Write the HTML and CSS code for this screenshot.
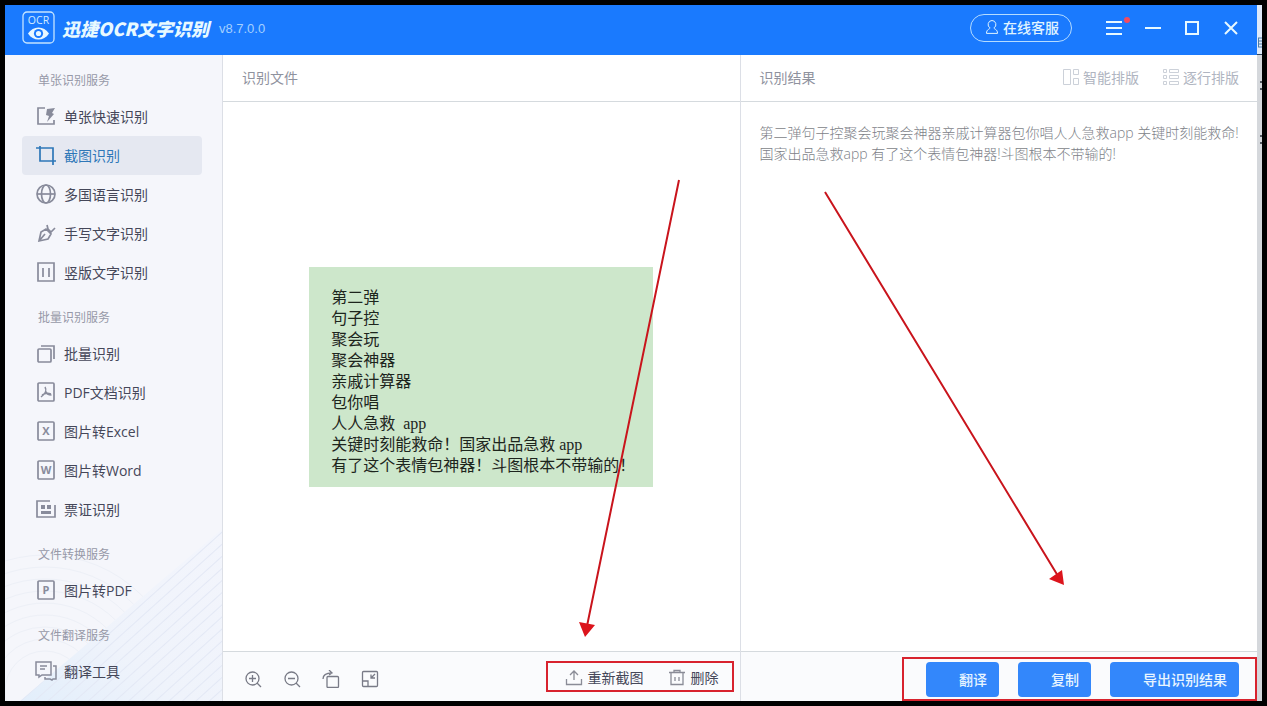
FILE: index.html
```
<!DOCTYPE html>
<html lang="zh-CN">
<head>
  <meta charset="UTF-8">
  <title>迅捷OCR文字识别</title>
  <link rel="stylesheet" href="styles.css">
</head>
<body>
  <div class="window">
    <header class="titlebar">
      <svg class="logo" viewBox="0 0 34 34" width="34" height="34">
        <rect x="1" y="1" width="31" height="31" rx="4" fill="none" stroke="#c4e4ff" stroke-width="1.3"/>
        <text x="16.5" y="12.500" text-anchor="middle" font-size="10.500" fill="#d4ecff">OCR</text>
        <path d="M6 22.500c5-8 16-8 21 0-5 8-16 8-21 0z" fill="#e8f7ff" stroke="none"/>
        <circle cx="16.5" cy="22.500" r="4.6" fill="#1a7afe" stroke="none"/>
        <circle cx="16.5" cy="22.500" r="2.6" fill="#e8f7ff" stroke="none"/>
      </svg>
      <h1 class="app-name">迅捷OCR文字识别</h1>
      <span class="version">v8.7.0.0</span>
      <button class="service">
        <svg viewBox="0 0 14 16" width="14" height="16"><path d="M7 1.5a4 4 0 0 1 2 7.400c0 1.500 3.500 1 3.500 5.500h-11c0-4.500 3.500-4 3.500-5.500a4 4 0 0 1 2-7.400z"/></svg>
        在线客服
      </button>
      <div class="window-buttons">
        <button aria-label="菜单"><svg viewBox="0 0 18 18" width="18" height="18"><path d="M1 3h16M1 9h16M1 15h16"/></svg><i class="dot"></i></button>
        <button aria-label="最小化"><svg viewBox="0 0 18 18" width="18" height="18"><path d="M1 9h16"/></svg></button>
        <button aria-label="最大化"><svg viewBox="0 0 18 18" width="18" height="18"><path d="M3 3h12v12H3z"/></svg></button>
        <button aria-label="关闭"><svg viewBox="0 0 18 18" width="18" height="18"><path d="M3 3l12 12M15 3L3 15"/></svg></button>
      </div>
    </header>

    <nav class="sidebar">
      <svg class="waves" viewBox="0 0 217 180" preserveAspectRatio="xMaxYMax slice">
        <defs>
          <pattern id="stripes" width="9" height="9" patternUnits="userSpaceOnUse" patternTransform="rotate(-42)">
            <path d="M0 .5h9" stroke="#e3e8f5"/>
          </pattern>
          <linearGradient id="tint" x1="0" y1="1" x2="1" y2="0">
            <stop offset="0" stop-color="#e2eefb"/>
            <stop offset=".4" stop-color="#eff3fb"/>
            <stop offset="1" stop-color="#f3f5fc"/>
          </linearGradient>
        </defs>
        <g fill="none" stroke="#edf0f7">
          <circle cx="40" cy="170" r="40"/><circle cx="40" cy="170" r="52"/><circle cx="40" cy="170" r="64"/>
          <circle cx="40" cy="170" r="76"/><circle cx="40" cy="170" r="88"/><circle cx="40" cy="170" r="100"/>
          <circle cx="40" cy="170" r="112"/><circle cx="40" cy="170" r="124"/><circle cx="40" cy="170" r="136"/>
        </g>
        <path d="M15 180L217 8v172z" fill="url(#tint)" stroke="none"/>
        <path d="M15 180L217 8v172z" fill="url(#stripes)" stroke="none"/>
      </svg>

      <h2>单张识别服务</h2>
      <a href="#"><svg viewBox="0 0 20 20"><path d="M9 2H2v16h16v-4"/><path class="solid" d="M11 3l8-1-3 5 2 1-7 8 2-6-3-1z"/></svg>单张快速识别</a>
      <a href="#" class="active"><svg viewBox="0 0 20 20"><path d="M0 3h17v17M4 1v15h16"/></svg>截图识别</a>
      <a href="#"><svg viewBox="0 0 20 20"><circle cx="10" cy="10" r="9"/><ellipse cx="10" cy="10" rx="4.500" ry="9"/><path d="M1 10h18"/></svg>多国语言识别</a>
      <a href="#"><svg viewBox="0 0 20 20"><path d="M3 18l2-9 5-3 5 5-3 5zM3 18l6-7M11 2l1 4 3 3 4-4"/></svg>手写文字识别</a>
      <a href="#"><svg viewBox="0 0 20 20"><path d="M2 1h16v18H2zM7 6v9M13 6v9"/></svg>竖版文字识别</a>

      <h2>批量识别服务</h2>
      <a href="#"><svg viewBox="0 0 20 20"><rect x="2" y="6" width="13" height="13" rx="1"/><path d="M5 3h13v13"/></svg>批量识别</a>
      <a href="#"><svg viewBox="0 0 20 20"><rect x="2" y="1" width="16" height="18" rx="1"/><path class="thin" d="M9 5c2 3 0 7-4 10M9.500 9c1 3 3 4 6 4M6 13c3-2 6-2 9-1"/></svg>PDF文档识别</a>
      <a href="#"><svg viewBox="0 0 20 20"><rect x="2" y="1" width="16" height="18" rx="1"/><text x="10" y="14" text-anchor="middle">X</text></svg>图片转Excel</a>
      <a href="#"><svg viewBox="0 0 20 20"><rect x="2" y="1" width="16" height="18" rx="1"/><text x="10" y="14" text-anchor="middle">W</text></svg>图片转Word</a>
      <a href="#"><svg viewBox="0 0 20 20"><path d="M14 2H1v16h18V6"/><path class="solid" d="M5 6h4v4H5zM11 6h4v4h-4zM5 12h10v3H5z"/></svg>票证识别</a>

      <h2>文件转换服务</h2>
      <a href="#"><svg viewBox="0 0 20 20"><rect x="2" y="1" width="16" height="18" rx="1"/><text x="10" y="14" text-anchor="middle">P</text></svg>图片转PDF</a>

      <h2>文件翻译服务</h2>
      <a href="#"><svg viewBox="0 0 20 20"><path class="thin" d="M0 1h15v13H6l-3 2v-2H0zM4 5h7M4 8h5M17 5h3v13h-3l-1 1-2-1H9v-2"/></svg>翻译工具</a>
    </nav>

    <section class="panel">
      <div class="panel-head"><h3>识别文件</h3></div>
      <div class="preview">
        <div class="picture">第二弹
句子控
聚会玩
聚会神器
亲戚计算器
包你唱
人人急救  app
关键时刻能救命！国家出品急救 app
有了这个表情包神器！斗图根本不带输的！</div>
      </div>
      <div class="panel-foot">
        <div class="zoom-tools">
          <button aria-label="放大"><svg viewBox="0 0 18 18"><circle cx="8.500" cy="8.500" r="6.500"/><path d="M13 13l4 4M5 8.500h7M8.500 5v7"/></svg></button>
          <button aria-label="缩小"><svg viewBox="0 0 18 18"><circle cx="8.500" cy="8.500" r="6.500"/><path d="M13 13l4 4M5 8.500h7"/></svg></button>
          <button aria-label="旋转"><svg viewBox="0 0 18 18"><rect x="5" y="6.500" width="11.500" height="11" rx="1"/><path d="M1 9c0-4 3-6 9-6M7 0l3 3-3 2"/></svg></button>
          <button aria-label="适应窗口"><svg viewBox="0 0 18 18"><rect x="1.500" y="1.500" width="15" height="15" rx="1"/><path d="M2 11h5v5M14 4l-4 4M10 4.500V8h4"/></svg></button>
        </div>
        <div class="file-actions">
          <button><svg viewBox="0 0 18 18"><path d="M1.500 11v5.500h15V11M9 12V3M5 7l4-4 4 4"/></svg>重新截图</button>
          <button><svg viewBox="0 0 18 18"><path d="M1 4.500h16M3 4.500v12h12v-12M6 4V2.500h6V4M7 9v4M11 9v4"/></svg>删除</button>
        </div>
      </div>
    </section>

    <section class="panel">
      <div class="panel-head">
        <h3>识别结果</h3>
        <div class="layouts">
          <button><svg viewBox="0 0 16 16"><path d="M.5.5h7v15h-7zM10.500.5h5v5h-5zM10.500 9.500h5v6h-5z"/></svg>智能排版</button>
          <button><svg viewBox="0 0 16 16"><path d="M.5.5h3v3h-3zM.5 6.500h3v3h-3zM.5 12.500h3v3h-3zM6.500.5h9v3h-9zM6.500 6.500h9v3h-9zM6.500 12.500h9v3h-9z"/></svg>逐行排版</button>
        </div>
      </div>
      <p class="result">第二弹句子控聚会玩聚会神器亲戚计算器包你唱人人急救app 关键时刻能救命!<br>国家出品急救app 有了这个表情包神器!斗图根本不带输的!</p>
      <div class="panel-foot">
        <div class="result-actions">
          <button>翻译</button>
          <button>复制</button>
          <button>导出识别结果</button>
        </div>
      </div>
    </section>
  </div>

  <!-- sliver of the window behind -->
  <div class="edge">
    <svg viewBox="0 0 5 150" width="5" height="150">
      <path d="M1 33h4M1 36h4M1 39h4M1 42h4M1.500 33v9" stroke="#4d7ca8"/>
      <path d="M0 49.500h5" stroke="#31465c"/>
      <path d="M3 77h2M3 84h2M3 131h2M3 138h2" stroke="#555b63" stroke-width="2"/>
    </svg>
  </div>

  <!-- guide arrows -->
  <svg class="arrows" viewBox="0 0 1267 706" preserveAspectRatio="none">
    <path d="M679 180L587 626M825 192L1058 576"/>
    <path class="head" d="M579 622l16 3-10 12zM1049 579l13-9 2 15z"/>
  </svg>
</body>
</html>
```
FILE: styles.css
```
* {
  box-sizing: border-box;
}

body {
  position: relative;
  margin: 0;
  min-height: 100vh;
  display: flex;
  padding: 5px;
  background: #000;
  font-family: "Open Sans", "Noto Sans CJK SC", sans-serif;
  font-size: 14px;
  color: #454759;
}

h1, h2, h3, p {
  margin: 0;
  font-weight: normal;
}

svg {
  fill: none;
  stroke: currentColor;
}

svg text {
  stroke: none;
}

button {
  font: inherit;
  color: inherit;
  background: none;
  border: none;
  padding: 0;
  display: flex;
  align-items: center;
  cursor: pointer;
}

.window {
  flex: 1;
  display: grid;
  grid-template-columns: 217px 1fr 1fr;
  grid-template-rows: 50px 1fr;
  background: #fff;
}

.edge {
  width: 5px;
  background: linear-gradient(#dfeafa 50px, #d5d8dc 50px);
}

/* title bar */
.titlebar {
  grid-column: 1 / -1;
  display: flex;
  align-items: center;
  padding: 0 7px 4px 17px;
  background: #1a7afe;
  color: #fff;
}

.app-name {
  margin: 0 10px 0 6px;
  font-family: "Noto Sans CJK SC", sans-serif;
  font-size: 18px;
  font-weight: 900;
  font-style: italic;
  color: #e8f9ff;
}

.version {
  font-family: "Liberation Sans", sans-serif;
  font-size: 13px;
  color: #a5d0ff;
}

.service {
  gap: 4px;
  height: 28px;
  margin: 0 22px 0 auto;
  padding: 0 12px 2px 14px;
  border: 1px solid #b5dcff;
  border-radius: 14px;
  color: #e0f4ff;
  font-weight: 500;
}

.window-buttons {
  display: flex;
}

.window-buttons button {
  position: relative;
  width: 39px;
  height: 36px;
  justify-content: center;
}

.window-buttons svg {
  stroke: #e8f9ff;
  stroke-width: 2;
}

.dot {
  position: absolute;
  top: 7px;
  right: 3px;
  width: 6px;
  height: 6px;
  border-radius: 50%;
  background: #f34b5f;
}

/* sidebar */
.sidebar {
  position: relative;
  padding: 0 20px 0 17px;
  background: #f5f6fb;
}

.waves {
  position: absolute;
  left: 0;
  bottom: 0;
  width: 100%;
  height: 180px;
}

.sidebar h2 {
  position: relative;
  height: 42px;
  padding: 10px 0 0 16px;
  font-size: 12px;
  line-height: 32px;
  color: #9799a8;
}

.sidebar a {
  position: relative;
  display: flex;
  align-items: center;
  gap: 8px;
  height: 39px;
  padding: 0 0 2px 14px;
  border-radius: 4px;
  color: #454759;
  text-decoration: none;
}

.sidebar a svg {
  width: 20px;
  height: 20px;
  color: #888b9b;
  stroke-width: 1.7;
  overflow: visible;
}

.sidebar a text {
  font-size: 11px;
  font-weight: bold;
  fill: #888b9b;
}

.sidebar .solid {
  fill: currentColor;
  stroke: none;
}

.sidebar .thin {
  stroke-width: 1.5;
}

.sidebar .active {
  background: #e5e8f1;
  color: #2e77b8;
}

.sidebar .active svg {
  color: #2e77b8;
}

/* panels */
.panel {
  display: flex;
  flex-direction: column;
  border-left: 1px solid #dcdfe6;
}

.panel-head {
  display: flex;
  align-items: center;
  justify-content: space-between;
  height: 47px;
  padding: 0 18px 2px 19px;
  border-bottom: 1px solid #d5dade;
}

.panel-head h3 {
  font-size: 14px;
  color: #8f929e;
}

.layouts {
  display: flex;
  gap: 24px;
  color: #b0b5c1;
}

.layouts button {
  gap: 4px;
}

.layouts svg {
  width: 16px;
  height: 16px;
  stroke: #ccd1d9;
}

.preview {
  flex: 1;
  display: flex;
  align-items: center;
  justify-content: center;
}

.picture {
  width: 344px;
  padding: 20px 0 11px 22px;
  background: #cde7cb;
  color: #1d251d;
  font-family: "Liberation Serif", "Noto Sans CJK SC", serif;
  font-size: 16px;
  line-height: 21px;
  white-space: pre;
}

.panel-foot {
  display: flex;
  justify-content: space-between;
  align-items: center;
  height: 50px;
  border-top: 1px solid #d5dade;
  background: #fafbfd;
}

.zoom-tools {
  display: flex;
  gap: 21px;
  padding: 5px 0 0 21px;
  color: #797b87;
}

.zoom-tools svg,
.file-actions svg {
  width: 18px;
  height: 18px;
  stroke-width: 1.3;
}

.file-actions {
  display: flex;
  gap: 24px;
  height: 31px;
  margin-right: 6px;
  padding: 0 13px 0 17px;
  border: 2px solid #d8232e;
}

.file-actions button {
  gap: 5px;
}

.file-actions svg {
  color: #8a8c97;
}

.result {
  flex: 1;
  padding: 20px 0 0 19px;
  font-weight: 300;
  line-height: 21px;
  white-space: nowrap;
  color: #7d7f88;
}

.result-actions {
  display: flex;
  gap: 19px;
  align-self: flex-end;
  height: 44px;
  margin-left: auto;
  padding: 3px 16px 2px 22px;
  border: 2px solid #d8232e;
}

.result-actions button {
  height: 35px;
  padding: 0 12px 2px 33px;
  border-radius: 4px;
  background: #3387fb;
  color: #e8f5ff;
  font-weight: 500;
}

/* arrows drawn over the window */
.arrows {
  position: absolute;
  inset: 0;
  width: 100%;
  height: 100%;
  pointer-events: none;
  stroke: #c9141c;
  stroke-width: 2;
}

.arrows .head {
  fill: #dc141c;
  stroke: none;
}
```
